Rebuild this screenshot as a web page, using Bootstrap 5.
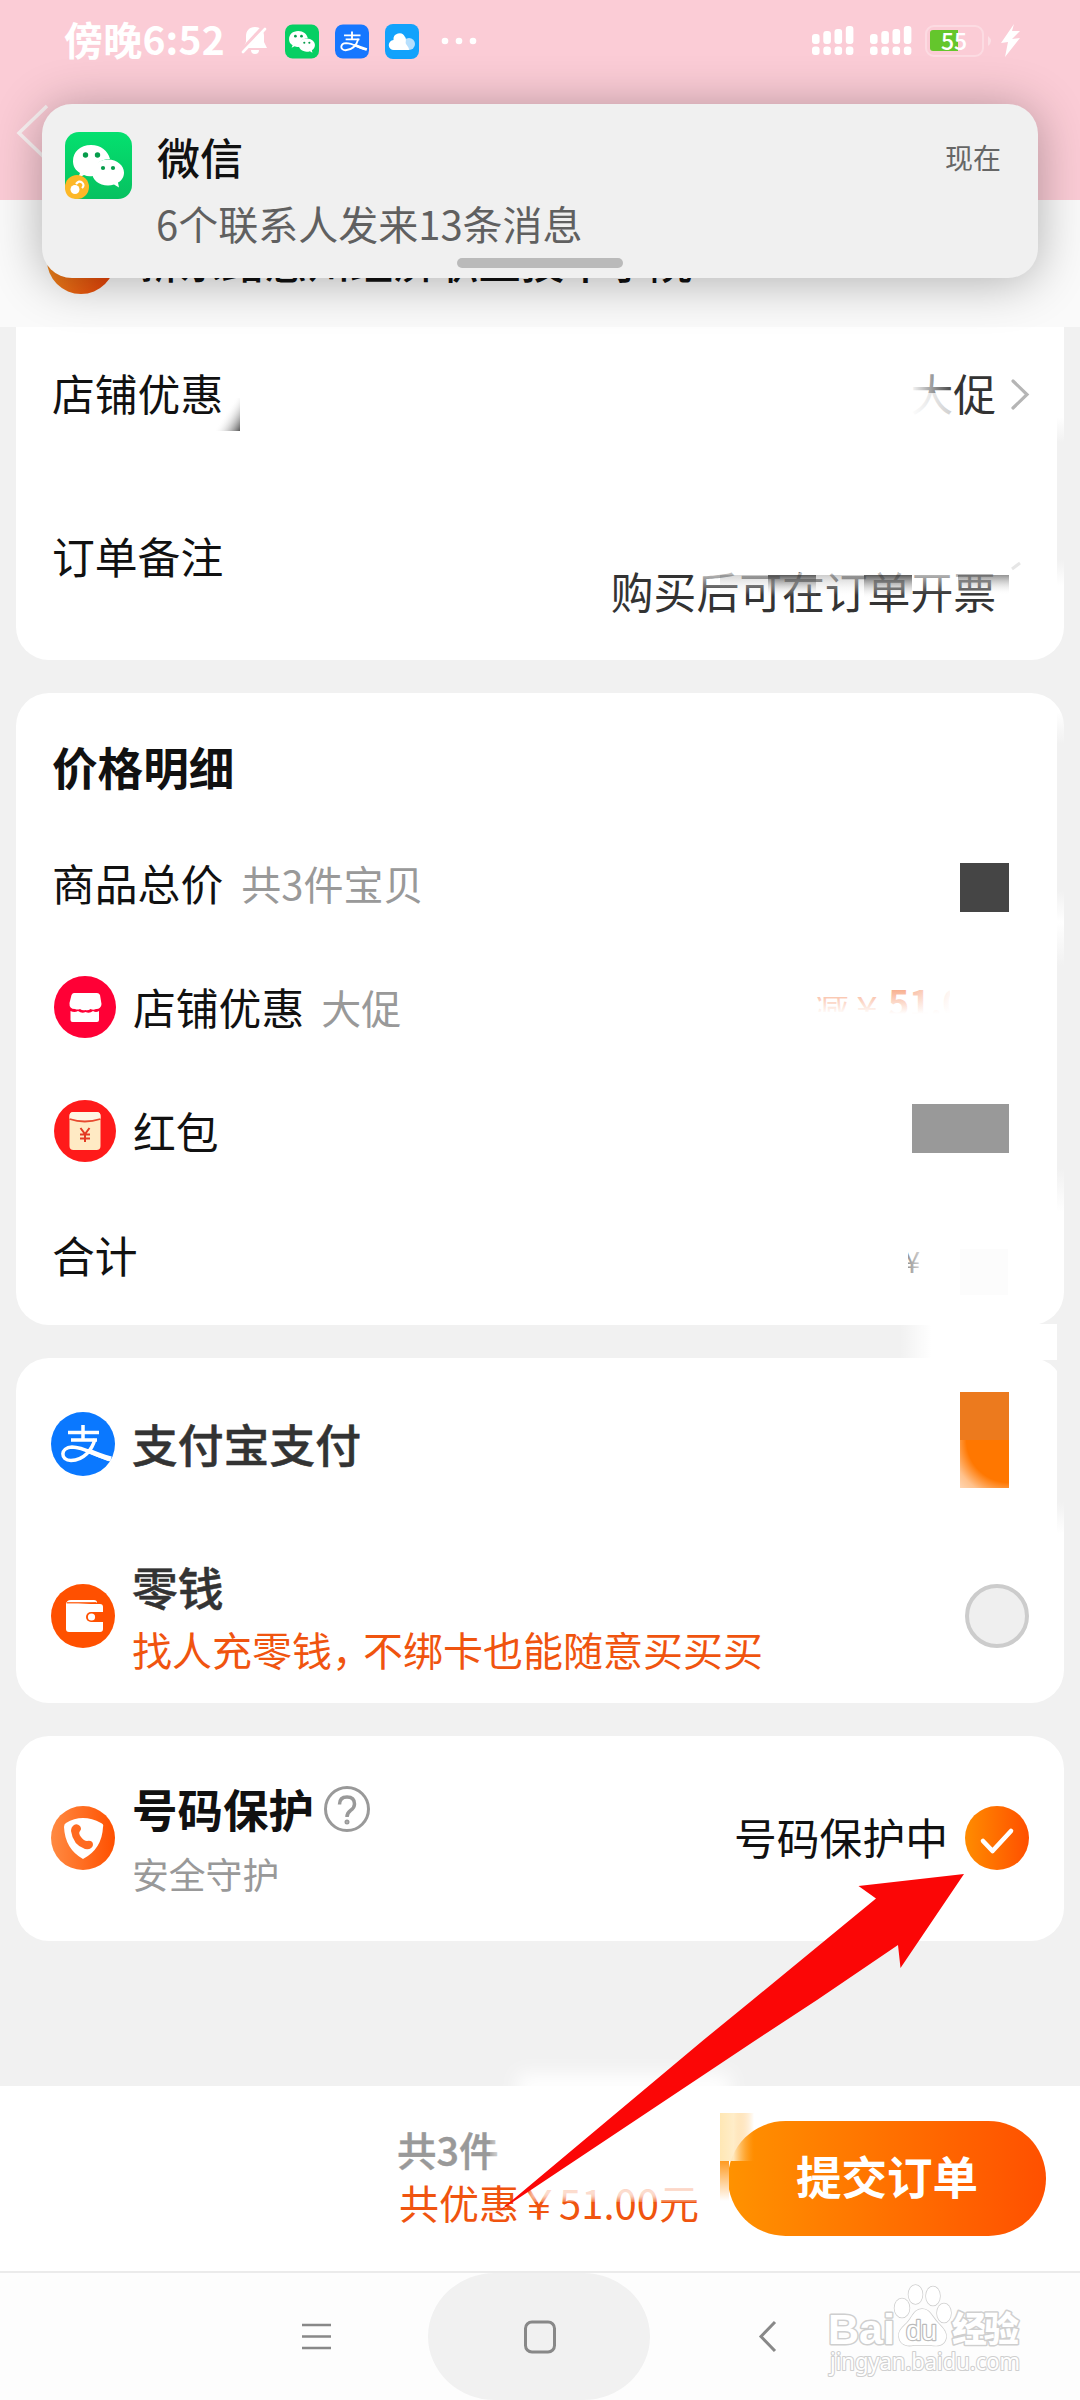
<!DOCTYPE html>
<html lang="zh-CN">
<head>
<meta charset="utf-8">
<meta name="viewport" content="width=device-width, initial-scale=1">
<title>确认订单</title>
<link rel="stylesheet" href="https://cdn.jsdelivr.net/npm/bootstrap@5.3.0/dist/css/bootstrap.min.css">
<style>
body{width:1080px;height:2400px;overflow:hidden;background:#f1f1f1;color:#111;font-family:"Noto Sans CJK SC","Noto Sans",sans-serif;font-size:42.8px;line-height:1}
svg{display:block;flex:none}
.tx{display:block;white-space:nowrap;line-height:1;padding-bottom:.11em}
.phone{width:1080px;height:2400px}
.head-pink{height:200px;background:#fbccd6}
.status{height:82px;padding:0 59px 0 64px;color:#fff}
.clock{font-size:39px;font-weight:700;letter-spacing:.2px}
.addr{height:127px;background:#fafafa;padding-left:47px}
.pin{width:68px;height:68px;border-radius:50%;background:linear-gradient(100deg,#ec8a1e,#e63c06);margin-top:26px}
.addr-text{margin:39px 0 0 21px;height:44px;overflow:hidden;font-size:42.8px;font-weight:500}
.notice{left:42px;top:104px;width:996px;height:174px;border-radius:30px;background:#f0f0f0;box-shadow:0 4px 50px rgba(0,0,0,.3);padding:28px 37px 0 23px}
.n-title{font-size:43px;font-weight:500}
.n-sub{font-size:40px;color:#606060}
.n-time{font-size:28px;color:#666}
.handle{left:415px;top:154px;width:166px;height:10px;border-radius:5px;background:#bababa}
.panel{margin:0 16px;background:#fff;border-radius:33px;padding:0 36px}
.panel-first{border-radius:0 0 33px 33px;height:333px}
.gap-y{height:33px}
.h2x{font-size:45.6px;font-weight:700}
.sub{font-size:40px;color:#999}
.r120{height:120px}.r124{height:124px}.r126{height:126px}
.ink3{color:#333}
.orange{color:#f0540f}
.blk{width:49px;height:49px;background:#454545;margin-right:19px}
.blk-w{width:97px;background:#999}
.blk-o{height:96px;background:radial-gradient(circle at 100% 0,#f70 0,#f70 62%,rgba(255,119,0,.45) 85%,rgba(255,119,0,0) 130%) 0 48px/49px 48px no-repeat,linear-gradient(#ec7a1e,#ec7a1e) 0 0/49px 48px no-repeat}
.bar{margin-top:145px;height:185px;background:#fff;padding:0 34px 0 397px}
.btn-order,.btn-order:hover{width:318px;height:115px;border:0;border-radius:58px;background:linear-gradient(90deg,#ff9200,#ff5000);color:#fff;font-size:45.5px;font-weight:700;padding:0;line-height:1}
.nav-sys{height:129px;background:#fdfdfd;border-top:2px solid #ebebeb}
.home-key{left:428px;top:0;width:222px;height:127px;border-radius:74px/70px;background:#f1f1f1}
.over{left:0;top:0;pointer-events:none}
</style>
</head>
<body>
<div class="phone position-relative d-flex flex-column">

  <header class="head-pink">
    <div class="status d-flex align-items-center">
      <span class="tx clock">傍晚6:52</span>
      <svg class="ms-3" width="28" height="30" viewBox="0 0 28 30" fill="#fff"><path d="M14 1c-6 0-9 4-9 9v6l-3 6h24l-3-6v-6c0-5-3-9-9-9zM10 24h8a4 4 0 0 1-8 0z"/><path d="M0 26 24 0" stroke="#fbccd6" stroke-width="5"/><path d="M2 26 24 3" stroke="#fff" stroke-width="2.600" stroke-linecap="round"/></svg>
      <svg style="margin-left:16px" width="34" height="35" viewBox="0 0 67 67"><rect width="67" height="67" rx="15" fill="#06cf63"/><use href="#wx"/></svg>
      <svg style="margin-left:16px" width="34" height="35" viewBox="0 0 64 64"><rect width="64" height="64" rx="15" fill="#1677ff"/><use href="#zfb"/></svg>
      <svg style="margin-left:16px" width="34" height="35" viewBox="0 0 34 35"><rect width="34" height="35" rx="8" fill="#12a2fc"/><circle cx="24" cy="20" r="6" fill="#b6dffd"/><path d="M9 26a5 5 0 0 1-.5-10A6 6 0 0 1 20 13c2 2 0 5 1 7s3 3 3 6z" fill="#fff"/></svg>
      <svg style="margin-left:22px" width="38" height="10" fill="#fff"><circle cx="4" cy="5" r="3.300"/><circle cx="18" cy="5" r="3.300"/><circle cx="32" cy="5" r="3.300"/></svg>
      <svg class="ms-auto" width="210" height="36" viewBox="811 23 210 36" fill="#fff">
        <g id="sig"><rect x="812" y="34" width="7.600" height="10" rx="3"/><rect x="823.300" y="31" width="7.600" height="13" rx="3"/><rect x="834.500" y="29" width="7.600" height="15" rx="3"/><rect x="845.800" y="26" width="7.600" height="18" rx="3"/><rect x="812" y="46.500" width="7.600" height="8.500" rx="3"/><rect x="823.300" y="46.500" width="7.600" height="8.500" rx="3"/><rect x="834.500" y="46.500" width="7.600" height="8.500" rx="3"/><rect x="845.800" y="46.500" width="7.600" height="8.500" rx="3"/></g>
        <use href="#sig" x="58"/>
        <rect x="926" y="26" width="57" height="30" rx="8" fill="none" stroke="#fff" stroke-opacity=".3" stroke-width="2"/>
        <path d="M988 36q6 5 0 10z" opacity=".4"/>
        <path d="M933 30h25v21h-25q-3 0-3-3V33q0-3 3-3z" fill="#64c62c"/>
        <text x="941" y="50" font-size="23" font-weight="500">55</text>
        <path d="M1014 24 1001 43l7-1-3 15 15-19-8 1 8-8-8 0z"/>
      </svg>
    </div>
    <svg width="60" height="70" viewBox="0 82 60 70" style="margin-top:18px"><path d="M47 88 19 115l28 27" fill="none" stroke="#fbf3f4" stroke-width="3.500"/></svg>
  </header>

  <section class="addr d-flex align-items-start">
    <div class="pin"></div>
    <div class="addr-text"><span class="tx">新东路惠州经济职业技术学院</span></div>
  </section>

  <section class="panel panel-first">
    <div class="d-flex align-items-center justify-content-between" style="height:136px">
      <span class="tx">店铺优惠</span>
      <div class="d-flex align-items-center">
        <span class="tx ink3">大促</span>
        <svg style="margin:0 -2px 0 14px" width="20" height="34"><path d="M3 3 17 16.500 3 30" fill="none" stroke="#b5b5b5" stroke-width="3.200" stroke-linecap="round"/></svg>
      </div>
    </div>
    <div class="d-flex justify-content-between">
      <span class="tx" style="padding-top:71px">订单备注</span>
      <span class="tx ink3" style="padding-top:106px;margin-right:32px">购买后可在订单开票</span>
    </div>
  </section>
  <div class="gap-y"></div>

  <section class="panel" style="height:632px;padding-top:20px">
    <div class="d-flex align-items-center" style="height:112px"><h2 class="tx h2x m-0">价格明细</h2></div>
    <div class="r120 d-flex align-items-center">
      <span class="tx">商品总价</span><span class="tx sub" style="margin-left:18px">共3件宝贝</span>
      <div class="blk ms-auto mt-1"></div>
    </div>
    <div class="r126 d-flex align-items-center">
      <svg style="margin:-2px 0 0 2px" width="62" height="62" viewBox="0 0 62 62"><circle cx="31" cy="31" r="31" fill="#ff0036"/><path d="M20 17h23q2 0 3 2l1.500 9a5 5 0 0 1-5.500 5 6 6 0 0 1-5.500 0 6 6 0 0 1-5 1 6 6 0 0 1-5.500-1 6 6 0 0 1-5 0q-6 0-5.500-6l2-8q1-2 2.500-2z" fill="#fff"/><path d="M16.500 35q4 2 7.500 0 4 3 7.500 1 4 2 7.500-1 3 2 6 0v9q0 2-2 2H18.500q-2 0-2-2z" fill="#fff"/></svg>
      <span class="tx" style="margin-left:17px;margin-top:2px">店铺优惠</span><span class="tx sub" style="margin-left:17px;margin-top:2px">大促</span>
    </div>
    <div class="r124 d-flex align-items-center">
      <svg style="margin:-4px 0 0 2px" width="62" height="62" viewBox="0 0 62 62"><circle cx="31" cy="31" r="31" fill="#ff1a1a"/><rect x="15.500" y="12" width="31" height="38" rx="4" fill="#ffeac4"/><path d="M15.500 19v-3q0-4 4-4h23q4 0 4 4v3q-15 5-31 0z" fill="#fff6e4"/><path d="M15.500 19q15 5 31 0" fill="none" stroke="#e8492e" stroke-width="1.800"/><path d="m26.500 28 4.500 6 4.500-6M31 34v8M26 34.500h10M26 38.500h10" fill="none" stroke="#e33a24" stroke-width="2"/></svg>
      <span class="tx" style="margin-left:17px">红包</span>
      <div class="blk blk-w ms-auto" style="margin-top:-10px"></div>
    </div>
    <div class="r124 d-flex align-items-center"><span class="tx">合计</span></div>
  </section>
  <div class="gap-y"></div>

  <section class="panel" style="height:345px">
    <div class="d-flex align-items-center" style="height:173px">
      <svg style="margin:-2px 0 0 -1px" width="64" height="64" viewBox="0 0 64 64"><circle cx="32" cy="32" r="32" fill="#0a78ff"/><use href="#zfb"/></svg>
      <span class="tx ink3" style="margin-left:17px;margin-top:3px;font-size:45.800px;font-weight:500;-webkit-text-stroke:.5px #333">支付宝支付</span>
      <div class="blk blk-o ms-auto" style="margin-top:-9px"></div>
    </div>
    <div class="d-flex align-items-center" style="height:172px">
      <svg style="margin:-2px 0 0 -1px" width="64" height="64" viewBox="0 0 64 64"><circle cx="32" cy="32" r="32" fill="#ff5000"/><path d="M15 21q0-5 5-5h23q3 0 3 2.500z" fill="#fff"/><path d="M15 20h34q3 0 3 3v22q0 3-3 3H18q-3 0-3-3z" fill="#fff"/><path d="M16 18.800h29" stroke="#ff5000" stroke-width="1.200"/><path d="M52 28H40a5 5 0 0 0 0 10h12z" fill="#ff5000"/><circle cx="40.500" cy="33" r="3.600" fill="#fff"/></svg>
      <div style="margin-left:17px;padding-top:6px">
        <div class="d-flex align-items-center" style="height:62px"><span class="tx ink3" style="font-size:45.800px;font-weight:500;-webkit-text-stroke:.5px #333">零钱</span></div>
        <div class="d-flex align-items-center" style="height:62px"><span class="tx orange" style="font-size:40px">找人充零钱<span style="letter-spacing:-9px">，</span>不绑卡也能随意买买买</span></div>
      </div>
      <svg class="ms-auto" style="margin:-2px -1px 0 0" width="64" height="64"><circle cx="32" cy="32" r="30" fill="#efefef" stroke="#ccc" stroke-width="4"/></svg>
    </div>
  </section>
  <div class="gap-y"></div>

  <section class="panel d-flex align-items-center" style="height:205px">
    <svg style="margin:-1px 0 0 -1px" width="64" height="64" viewBox="0 0 64 64"><defs><linearGradient id="og"><stop stop-color="#ff8a42"/><stop offset="1" stop-color="#ff5000"/></linearGradient></defs><circle cx="32" cy="32" r="32" fill="url(#og)"/><path d="M32 12q9 0 18 5 3 1 2 4-1 22-20 32Q14 43 13 21q0-3 2-4 8-5 17-5z" fill="#fff"/><path d="M23 19q3-2 6 1 2 3 0 5-2 2 1 6 3 4 6 4 6-1 6 4-1 5-8 4Q22 39 20 25q0-4 3-6z" fill="#ff6a20"/></svg>
    <div style="margin-left:17px;padding-top:9px">
      <div class="d-flex align-items-center" style="height:64px"><span class="tx" style="font-size:45.500px;font-weight:700">号码保护</span>
        <svg style="margin:-4px 0 0 10px" width="46" height="46" fill="none" stroke="#999" stroke-width="3"><circle cx="23" cy="23" r="21.500"/><path d="M15.500 18.500q0-7.500 7.500-7.500t7.500 7q0 4-4 6.500-3.500 2.500-3.500 6.500" stroke-width="3.500"/><circle cx="23" cy="36" r="1.500" stroke-width="2"/></svg>
      </div>
      <div class="d-flex align-items-center" style="height:64px"><span class="tx sub" style="font-size:36.800px">安全守护</span></div>
    </div>
    <span class="tx ms-auto" style="margin-right:17px">号码保护中</span>
    <svg style="margin:-1px -1px 0 0" width="64" height="64"><defs><linearGradient id="ck"><stop stop-color="#ff8c00"/><stop offset="1" stop-color="#ff4f00"/></linearGradient></defs><circle cx="32" cy="32" r="32" fill="url(#ck)"/><path d="m18 35 9.500 10L46 25" fill="none" stroke="#fff" stroke-width="4.600" stroke-linecap="round" stroke-linejoin="round"/></svg>
  </section>

  <footer class="bar d-flex align-items-center justify-content-between">
    <div style="margin-top:-2px">
      <div class="d-flex align-items-center" style="height:54px"><span class="tx sub" style="font-size:39.500px;font-weight:500;-webkit-text-stroke:.4px #999">共3件</span></div>
      <div class="d-flex align-items-center" style="height:54px;padding-left:2px"><span class="tx orange" style="font-size:40px">共优惠￥51.00元</span></div>
    </div>
    <button type="button" class="btn btn-order"><span class="tx">提交订单</span></button>
  </footer>
  <nav class="nav-sys position-relative">
    <div class="home-key position-absolute"></div>
    <svg class="position-relative" width="1080" height="127" fill="none" stroke="#888" stroke-width="3"><path d="M302 52h29M302 63.500h29M302 75h29" stroke-width="2.500"/><rect x="525.500" y="49" width="29" height="30" rx="6.500"/><path d="M775 49 761 63.500 775 78"/></svg>
  </nav>

  <!-- faded patches, leftover strokes, pointer arrow and watermark lie over the page -->
  <svg class="over position-absolute" width="1080" height="2400" viewBox="0 0 1080 2400">
    <defs>
      <filter id="b3"><feGaussianBlur stdDeviation="3"/></filter>
      <filter id="b8" x="-20%" y="-60%" width="140%" height="220%"><feGaussianBlur stdDeviation="9"/></filter>
      <linearGradient id="dk" x1="0" y1="0" x2="0" y2="1"><stop stop-color="#222" stop-opacity=".75"/><stop offset="1" stop-color="#fff" stop-opacity="0"/></linearGradient>
      <linearGradient id="wd" x1="0" y1="0" x2="0" y2="1"><stop stop-color="#fff" stop-opacity=".7"/><stop offset="1" stop-color="#fff" stop-opacity="0"/></linearGradient>
      <linearGradient id="corner" x1="0" y1=".2" x2="1" y2="1"><stop offset=".4" stop-color="#fff" stop-opacity="0"/><stop offset="1" stop-color="#555"/></linearGradient>
      <linearGradient id="wr"><stop stop-color="#fff"/><stop offset=".5" stop-color="#fff" stop-opacity=".5"/><stop offset="1" stop-color="#fff" stop-opacity="0"/></linearGradient>
      <linearGradient id="edge" x1="0" y1="0" x2="0" y2="1"><stop stop-color="#f1f1f1" stop-opacity="0"/><stop offset=".15" stop-color="#f1f1f1"/><stop offset=".85" stop-color="#f1f1f1"/><stop offset="1" stop-color="#f1f1f1" stop-opacity="0"/></linearGradient>
      <linearGradient id="seam"><stop stop-color="#fff" stop-opacity="0"/><stop offset=".2" stop-color="#fff"/></linearGradient>
      <linearGradient id="pale"><stop stop-color="#ffe7b4"/><stop offset=".4" stop-color="#ffecc6" stop-opacity=".95"/><stop offset="1" stop-color="#ffb040" stop-opacity="0"/></linearGradient>
      <linearGradient id="lo" x1="0" y1="0" x2="0" y2="1"><stop stop-color="#ff9a20"/><stop offset="1" stop-color="#fff"/></linearGradient>
      <clipPath id="c1"><path d="M810 997h75v-8h65v26h-65v-3h-75z"/></clipPath>
      <clipPath id="c2"><rect x="908" y="1248" width="14" height="28"/></clipPath>
      <linearGradient id="rf" gradientUnits="userSpaceOnUse" x1="0" y1="988" x2="0" y2="1014"><stop stop-color="#f0540f" stop-opacity=".5"/><stop offset="1" stop-color="#f0540f" stop-opacity="0"/></linearGradient>
      <linearGradient id="rt"><stop stop-color="#fff" stop-opacity="0"/><stop offset="1" stop-color="#fff"/></linearGradient>
      <g id="wx"><path d="M26 13C15 13 8 20 8 29c0 5 2 9 7 12l-2 5 6-3q4 2 9 1c0-10 6-17 17-17C43 19 36 13 26 13z" fill="#fff"/><path d="M43 27.500c-9 0-16 6-16 13s7 13 16 13q3 0 6-1l5 3-1-5c4-2 6-6 6-10 0-7-7-13-16-13z" fill="#fff"/><g fill="#069c4b"><circle cx="20.500" cy="23" r="2.700"/><circle cx="32.500" cy="23" r="2.700"/><circle cx="38" cy="36" r="2.100"/><circle cx="48" cy="36" r="2.100"/></g></g>
      <g id="zfb" fill="none" stroke="#fff" stroke-width="3.500"><path d="M17 20.500h31M32 13v15M20 28h26"/><path d="M44 27C41 38 33 48 20 48.500c-11 0-11-13 1-13.500 12 0 22 8 37 12.500"/><path d="M38 39q9 4 22 8" stroke-width="5"/></g>
    </defs>
    <path d="M213 398h27v33h-27z" fill="url(#corner)"/>
    <path d="M910 370h46v52h-46z" fill="url(#wr)"/><path d="M908 393h44v26h-44z" fill="#fff" opacity=".75"/>
    <path d="M695 573h315v22H695z" fill="url(#wd)"/>
    <g fill="url(#dk)"><path d="M768 575h48v22h-48z"/><path d="M864 575h48v24h-48z"/></g>
    <path opacity=".25" d="M720 575h48v22h-48z" fill="url(#dk)"/><path opacity=".3" d="M816 575h48v22h-48z" fill="url(#dk)"/><path opacity=".65" d="M958 575h51v20h-51z" fill="url(#dk)"/>
    <path d="m1012 569 8-6" stroke="#e6e6e6" stroke-width="3"/>
    <g fill="url(#edge)"><path d="M1057 417h8v168h-8z"/><path d="M1057 712h8v210h-8z"/><path d="M1057 922h8v290h-8z"/><path d="M1057 1328h8v205h-8z"/></g>
    <path d="M900 1324h157v36H900z" fill="url(#seam)"/>
    <path d="M960 1249h48v46h-48z" fill="#fcfcfc"/>
    <g clip-path="url(#c1)" fill="url(#rf)"><text x="813" y="1021" font-size="36">减￥</text><text x="888" y="1017" font-size="36" font-weight="700">51.00</text></g>
    <path d="M905 985h50v32h-50z" fill="url(#rt)"/>
    <g clip-path="url(#c2)"><text x="904" y="1273" font-size="29" fill="#999">¥</text></g><path d="M908 1248h15v28h-15z" fill="url(#rt)" opacity=".7"/>
    <path d="M518 2074h212v28H518z" fill="#fff" filter="url(#b8)"/>
    <path d="M530 2184h170v16H530z" fill="#fff" filter="url(#b3)" opacity=".8"/>
    <path d="M492 2134h14v36h-14z" fill="#fff" opacity=".5" filter="url(#b3)"/>
    <path d="M720 2113h34v48h-34z" fill="url(#pale)"/><path d="M720 2161h9v40h-9z" fill="url(#lo)"/>
    <path d="M964 1874 858.500 1886 876 1898.500 752.500 2000 703.500 2040 498 2212 756 2040 817 2000 898 1945 900.500 1968z" fill="#fb0606"/>
    <g fill="#fff" stroke="#cfcfcf" stroke-width="3" paint-order="stroke" stroke-linejoin="round">
      <text x="828" y="2344" font-family="Liberation Sans" font-weight="700" font-size="43" textLength="67" lengthAdjust="spacingAndGlyphs">Bai</text>
      <text x="952" y="2342" font-weight="900" font-size="35" textLength="67">经验</text>
      <text x="830" y="2370" font-family="Noto Sans" font-size="23" stroke-width="2.200" textLength="190" lengthAdjust="spacingAndGlyphs">jingyan.baidu.com</text>
      <g stroke-width="1.500"><ellipse cx="902" cy="2308" rx="7.500" ry="9.500"/><ellipse cx="915.500" cy="2294.500" rx="7" ry="9.500"/><ellipse cx="933" cy="2296" rx="7" ry="9.500"/><ellipse cx="944" cy="2313" rx="7" ry="9.500"/><path d="M922 2309c8 0 10 8 16 14s9 10 8 15c-2 9-10 8-16 7h-16c-8 2-14-1-15-8-1-6 3-9 8-14s7-14 15-14z"/></g>
      <text x="906" y="2340" font-family="Liberation Sans" font-size="27" stroke="#bbb" stroke-width="2.400" textLength="31" lengthAdjust="spacingAndGlyphs">du</text>
    </g>
  </svg>

  <!-- heads-up notification -->
  <aside class="notice position-absolute">
    <div class="d-flex align-items-start">
      <svg width="67" height="67" viewBox="0 0 67 67"><defs><linearGradient id="wg" x2="0" y2="1"><stop stop-color="#04e06f"/><stop offset="1" stop-color="#07c160"/></linearGradient></defs><rect width="67" height="67" rx="14" fill="url(#wg)"/><use href="#wx"/><path d="M0 55a12 12 0 1 1 12 12Q0 67 0 55z" fill="#fdb827"/><circle cx="10" cy="57.500" r="4.500" fill="#fff"/><path d="M11 52q3-4 6-1.500t0 5.500" fill="none" stroke="#fff" stroke-width="2.200"/></svg>
      <div style="margin-left:25px">
        <div class="tx n-title" style="margin-top:3px">微信</div>
        <div class="tx n-sub" style="margin-top:20px;margin-left:-1px">6个联系人发来13条消息</div>
      </div>
      <span class="tx n-time ms-auto" style="margin-top:11px">现在</span>
    </div>
    <div class="handle position-absolute"></div>
  </aside>
</div>
<script src="https://cdn.jsdelivr.net/npm/bootstrap@5.3.0/dist/js/bootstrap.bundle.min.js"></script>
</body>
</html>
